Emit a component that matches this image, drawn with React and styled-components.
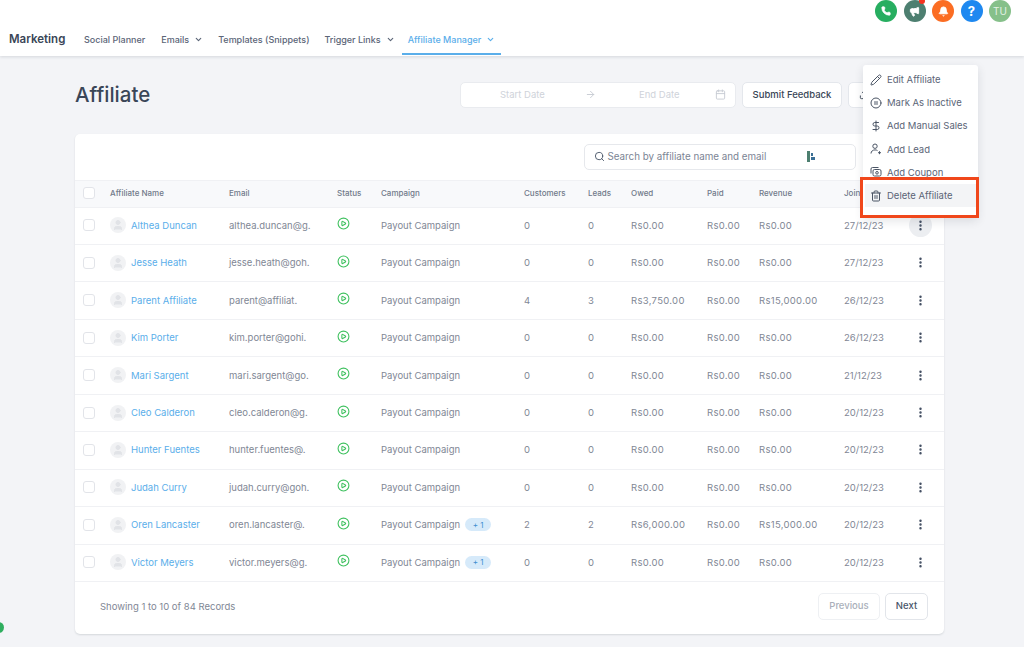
import React from "react";
import styled, { createGlobalStyle } from "styled-components";
import {
  Phone, Megaphone, Bell, ChevronDown, ArrowRight, Calendar, Search, CirclePlay,
  EllipsisVertical, Pencil, CirclePause, DollarSign, Trash2, Upload, User,
} from "lucide-react";

const Global = createGlobalStyle`
  html, body { margin: 0; padding: 0; height: 647px; overflow: hidden; background: #f3f4f7; }
  body { font-family: Inter, "Liberation Sans", sans-serif; color: #344054; }
  * { box-sizing: border-box; }
`;

const Page = styled.div`
  position: relative;
  width: 1024px;
  height: 647px;
  overflow: hidden;
`;

const Header = styled.header`
  height: 56px;
  background: #fff;
  box-shadow: 0 1px 3px rgba(30, 40, 60, 0.14);
  display: flex;
  flex-direction: column;
`;

const TopIcons = styled.div`
  height: 22px;
  display: flex;
  justify-content: flex-end;
  gap: 6.5px;
  padding-right: 13px;
`;

const RoundIcon = styled.div`
  position: relative;
  width: 22px;
  height: 22px;
  border-radius: 50%;
  background: ${(p) => p.$bg};
  color: ${(p) => p.$fg || "#fff"};
  display: flex;
  align-items: center;
  justify-content: center;
  font-size: ${(p) => p.$fs || 10}px;
  font-weight: ${(p) => p.$fw || 400};
`;

const RedDot = styled.span`
  position: absolute;
  top: -2px;
  right: 1px;
  width: 6px;
  height: 6px;
  border-radius: 50%;
  background: #f5331f;
`;

const NavRow = styled.nav`
  flex: 1;
  display: flex;
  align-items: flex-start;
  padding-left: 9px;
`;

const Brand = styled.div`
  font-size: 11.5px;
  font-weight: 600;
  color: #3a4657;
  width: 69px;
  padding-top: 10px;
`;

const NavItem = styled.a`
  display: flex;
  align-items: flex-start;
  gap: 5px;
  height: 33px;
  padding: 11px 6px 0;
  margin-right: ${(p) => p.$mr}px;
  font-size: 9px;
  line-height: 13px;
  font-weight: 500;
  color: ${(p) => (p.$active ? "#5aaeea" : "#5b6577")};
  border-bottom: 2px solid ${(p) => (p.$active ? "#5aaeea" : "transparent")};
  svg { margin-top: 2px; }
`;

const Main = styled.main`
  padding: 26px 0 0 75px;
  width: 944px;
`;

const TitleRow = styled.div`
  display: flex;
  align-items: center;
  height: 26px;
  margin-bottom: 26px;
`;

const Title = styled.h1`
  margin: 0 0 2px;
  font-size: 20.5px;
  font-weight: 500;
  color: #3a4657;
  flex: 1;
`;

const DatePicker = styled.div`
  width: 276px;
  height: 26px;
  background: #fff;
  border: 1px solid #e9ebef;
  border-radius: 5px;
  display: flex;
  align-items: center;
  color: #cfd3da;
  font-size: 9.5px;
  padding: 0 9px 1px 39px;
  margin-right: 6px;
`;

const DateText = styled.span`
  width: 46px;
`;

const DateArrow = styled.span`
  display: flex;
  margin: 0 43px 0 39px;
  color: #c6cad2;
`;

const DateIcon = styled.span`
  display: flex;
  margin-left: auto;
  color: #c6cad2;
`;

const Button = styled.button`
  height: 26px;
  background: #fff;
  border: 1px solid #e4e7ec;
  border-radius: 5px;
  font: 500 9.5px Inter, sans-serif;
  color: #3a4657;
  width: ${(p) => p.$w}px;
  margin-right: ${(p) => p.$mr || 0}px;
  display: flex;
  align-items: center;
  justify-content: ${(p) => (p.$start ? "flex-start" : "center")};
  padding: 0 0 1px ${(p) => (p.$start ? 10 : 0)}px;
  flex: none;
`;

const Card = styled.section`
  background: #fff;
  border-radius: 5px;
  box-shadow: 0 1px 2px rgba(30, 40, 60, 0.14);
  height: 500px;
  display: flex;
  flex-direction: column;
`;

const SearchRow = styled.div`
  height: 46px;
  display: flex;
  align-items: center;
  padding: 0 0 1px 508.5px;
`;

const SearchBox = styled.div`
  width: 272px;
  height: 26px;
  border: 1px solid #e6e8ec;
  border-radius: 5px;
  display: flex;
  align-items: center;
  gap: 3px;
  padding: 0 0 1px 9px;
  font-size: 9.8px;
  color: #7b8494;
  svg { color: #475467; }
`;

const SearchGlyph = styled.svg`
  margin-left: 38px;
`;

const gridTemplate = "27px 119px 108px 44px 143px 64px 43px 76px 52px 85px 65px 1fr";

const HeadRow = styled.div`
  height: 26.6px;
  display: grid;
  grid-template-columns: ${gridTemplate};
  align-items: center;
  padding: 0 0 2px 8px;
  background: #f8f9fb;
  border-top: 1px solid #f0f1f4;
  font-size: 8px;
  font-weight: 500;
  color: #717a8a;
`;

const Row = styled.div`
  height: 37.45px;
  display: grid;
  grid-template-columns: ${gridTemplate};
  align-items: center;
  padding: 0 0 1px 8px;
  border-top: 1px solid #f0f1f4;
  font-size: 9.5px;
  color: #7f8795;
`;

const Check = styled.span`
  width: 12px;
  height: 12px;
  border: 1px solid #e2e4e9;
  border-radius: 3px;
  background: #fff;
`;

const NameCell = styled.div`
  display: flex;
  align-items: center;
  gap: 5px;
`;

const Avatar = styled.span`
  width: 16px;
  height: 16px;
  border-radius: 50%;
  background: #f1f2f4;
  color: #e1e3e7;
  display: flex;
  align-items: center;
  justify-content: center;
`;

const NameLink = styled.a`
  color: #5aaeea;
`;

const StatusIcon = styled.span`
  display: flex;
  color: #3fc15f;
  margin-top: -3px;
`;

const CampaignCell = styled.div`
  display: flex;
  align-items: center;
  gap: 5px;
`;

const Money = styled.span`
  letter-spacing: 0.3px;
`;

const Badge = styled.span`
  width: 26px;
  height: 13px;
  border-radius: 7px;
  background: #d6eafa;
  color: #3f8fd0;
  font-size: 8px;
  display: flex;
  align-items: center;
  justify-content: center;
`;

const Kebab = styled.span`
  width: 23px;
  height: 23px;
  border-radius: 50%;
  background: ${(p) => (p.$on ? "#eceef1" : "transparent")};
  color: #3f4b5f;
  display: flex;
  align-items: center;
  justify-content: center;
`;

const Footer = styled.div`
  flex: 1;
  border-top: 1px solid #f0f1f4;
  display: flex;
  align-items: center;
  justify-content: space-between;
  padding: 0 16px 3px 25px;
  font-size: 9.5px;
  color: #7f8795;
`;

const Pager = styled.div`
  display: flex;
  gap: 5px;
`;

const PageBtn = styled.button`
  height: 27px;
  width: ${(p) => p.$w}px;
  background: #fff;
  border: 1px solid ${(p) => (p.$off ? "#eef0f3" : "#e2e5ea")};
  border-radius: 5px;
  font: 500 9.5px Inter, sans-serif;
  padding: 0 0 1px;
  color: ${(p) => (p.$off ? "#a9afba" : "#475467")};
`;

const Menu = styled.div`
  position: absolute;
  left: 863px;
  top: 65px;
  width: 115px;
  height: 153px;
  background: #fff;
  border-radius: 3px;
  box-shadow: 0 3px 10px rgba(30, 40, 60, 0.12);
  padding-top: 3px;
`;

const MenuItem = styled.div`
  height: 23.2px;
  display: flex;
  align-items: center;
  gap: 5px;
  margin: 0 ${(p) => (p.$on ? 2 : 0)}px;
  padding-left: ${(p) => (p.$on ? 5 : 7)}px;
  font-size: 9.5px;
  color: #5b6577;
  background: ${(p) => (p.$on ? "#f3f4f6" : "transparent")};
  svg { color: #4b5565; flex: none; }
`;

const Highlight = styled.div`
  position: absolute;
  left: 860px;
  top: 177px;
  width: 119px;
  height: 41px;
  border: 3px solid #f0471b;
`;

const Widget = styled.div`
  position: absolute;
  left: -7px;
  top: 622px;
  width: 11px;
  height: 11px;
  border-radius: 50%;
  background: #2fae5f;
`;

const LeadIcon = ({ size }) => (
  <svg width={size} height={size} viewBox="0 0 12 12" fill="none" stroke="currentColor" strokeWidth="1">
    <circle cx="5" cy="3.2" r="2.2" />
    <path d="M1 10.5c0-2.2 1.8-3.6 4-3.6 1 0 1.8.2 2.5.7" />
    <path d="M9.5 8.2v3M8 9.7h3" />
  </svg>
);

const CouponIcon = ({ size }) => (
  <svg width={size} height={size} viewBox="0 0 12 12" fill="none" stroke="currentColor" strokeWidth="1">
    <path d="M1 7.5V3a1.5 1.5 0 0 1 1.5-1.5h6" />
    <rect x="3" y="3.5" width="8" height="6.5" rx="1.5" />
    <circle cx="7" cy="6.8" r="1.3" />
  </svg>
);

const rows = [
  ["Althea Duncan", "althea.duncan@g.", "0", "0", "Rs0.00", "Rs0.00", "27/12/23"],
  ["Jesse Heath", "jesse.heath@goh.", "0", "0", "Rs0.00", "Rs0.00", "27/12/23"],
  ["Parent Affiliate", "parent@affiliat.", "4", "3", "Rs3,750.00", "Rs15,000.00", "26/12/23"],
  ["Kim Porter", "kim.porter@gohi.", "0", "0", "Rs0.00", "Rs0.00", "26/12/23"],
  ["Mari Sargent", "mari.sargent@go.", "0", "0", "Rs0.00", "Rs0.00", "21/12/23"],
  ["Cleo Calderon", "cleo.calderon@g.", "0", "0", "Rs0.00", "Rs0.00", "20/12/23"],
  ["Hunter Fuentes", "hunter.fuentes@.", "0", "0", "Rs0.00", "Rs0.00", "20/12/23"],
  ["Judah Curry", "judah.curry@goh.", "0", "0", "Rs0.00", "Rs0.00", "20/12/23"],
  ["Oren Lancaster", "oren.lancaster@.", "2", "2", "Rs6,000.00", "Rs15,000.00", "20/12/23", true],
  ["Victor Meyers", "victor.meyers@g.", "0", "0", "Rs0.00", "Rs0.00", "20/12/23", true],
];

const menu = [
  ["Edit Affiliate", Pencil],
  ["Mark As Inactive", CirclePause],
  ["Add Manual Sales", DollarSign],
  ["Add Lead", LeadIcon],
  ["Add Coupon", CouponIcon],
  ["Delete Affiliate", Trash2],
];

export default function App() {
  return (
    <Page>
      <Global />
      <Header>
        <TopIcons>
          <RoundIcon $bg="#27ae60"><Phone size={10} fill="#fff" /></RoundIcon>
          <RoundIcon $bg="#4d7f70"><Megaphone size={11} fill="#fff" /><RedDot /></RoundIcon>
          <RoundIcon $bg="#fb6d23"><Bell size={11} fill="#fff" /></RoundIcon>
          <RoundIcon $bg="#1e88f0" $fs={13} $fw={700}>?</RoundIcon>
          <RoundIcon $bg="#86c08a" $fg="#e4f2e5">TU</RoundIcon>
        </TopIcons>
        <NavRow>
          <Brand>Marketing</Brand>
          <NavItem $mr={4}>Social Planner</NavItem>
          <NavItem $mr={3}>Emails <ChevronDown size={9} strokeWidth={3} /></NavItem>
          <NavItem $mr={3}>Templates (Snippets)</NavItem>
          <NavItem $mr={1}>Trigger Links <ChevronDown size={9} strokeWidth={3} /></NavItem>
          <NavItem $active $mr={0}>Affiliate Manager <ChevronDown size={9} strokeWidth={3} /></NavItem>
        </NavRow>
      </Header>
      <Main>
        <TitleRow>
          <Title>Affiliate</Title>
          <DatePicker>
            <DateText>Start Date</DateText>
            <DateArrow><ArrowRight size={11} /></DateArrow>
            <DateText>End Date</DateText>
            <DateIcon><Calendar size={11} /></DateIcon>
          </DatePicker>
          <Button $w={100} $mr={6}>Submit Feedback</Button>
          <Button $w={96} $start><Upload size={11} /></Button>
        </TitleRow>
        <Card>
          <SearchRow>
            <SearchBox>
              <Search size={11} />
              <span>Search by affiliate name and email</span>
              <SearchGlyph width="9" height="11" viewBox="0 0 9 11">
                <rect x="0" y="0" width="3" height="11" fill="#4d7f70" />
                <rect x="4" y="2" width="2" height="3" fill="#3b6f95" />
                <rect x="4" y="6" width="4" height="3" fill="#3b6f95" />
              </SearchGlyph>
            </SearchBox>
          </SearchRow>
          <HeadRow>
            <Check />
            <span>Affiliate Name</span>
            <span>Email</span>
            <span>Status</span>
            <span>Campaign</span>
            <span>Customers</span>
            <span>Leads</span>
            <span>Owed</span>
            <span>Paid</span>
            <span>Revenue</span>
            <span>Joined</span>
          </HeadRow>
          {rows.map((r, i) => (
            <Row key={r[0]}>
              <Check />
              <NameCell>
                <Avatar><User size={12} fill="currentColor" /></Avatar>
                <NameLink>{r[0]}</NameLink>
              </NameCell>
              <span>{r[1]}</span>
              <StatusIcon><CirclePlay size={13} /></StatusIcon>
              <CampaignCell>
                Payout Campaign
                {r[7] && <Badge>+ 1</Badge>}
              </CampaignCell>
              <span>{r[2]}</span>
              <span>{r[3]}</span>
              <Money>{r[4]}</Money>
              <Money>Rs0.00</Money>
              <Money>{r[5]}</Money>
              <span>{r[6]}</span>
              <Kebab $on={i === 0}><EllipsisVertical size={13} strokeWidth={2.5} /></Kebab>
            </Row>
          ))}
          <Footer>
            <span>Showing 1 to 10 of 84 Records</span>
            <Pager>
              <PageBtn $w={62} $off>Previous</PageBtn>
              <PageBtn $w={43}>Next</PageBtn>
            </Pager>
          </Footer>
        </Card>
      </Main>
      <Menu>
        {menu.map(([label, Icon], i) => (
          <MenuItem key={label} $on={i === 5}>
            <Icon size={12} />
            {label}
          </MenuItem>
        ))}
      </Menu>
      <Highlight />
      <Widget />
    </Page>
  );
}
